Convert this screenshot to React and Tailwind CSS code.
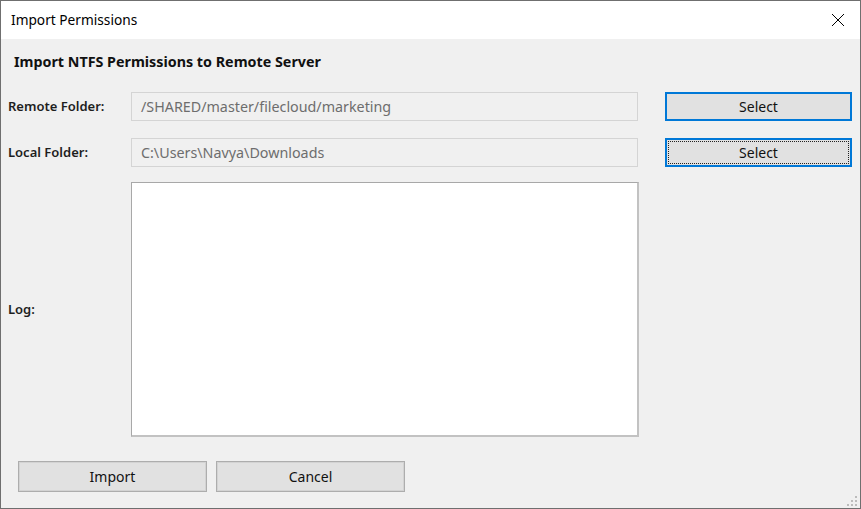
import React from 'react';

const FONT = { fontFamily: '"Noto Sans", "Open Sans", sans-serif' };

const Field = ({ label, value, focused }) => (
  <div className="flex items-center">
    <div className="w-[123px] text-[13px] font-semibold text-[#1e1e1e]">{label}</div>
    <div className="w-[507px] h-[29px] border border-[#d4d4d4] bg-[#f0f0f0] flex items-center px-[9px] text-[14.3px] text-[#6d6d6d]">
      {value}
    </div>
    <button
      type="button"
      className={`ml-[27px] w-[187px] h-[29px] border-2 border-[#0078d7] bg-[#e1e1e1] text-[14px] text-[#111] flex items-center justify-center ${focused ? 'outline-dotted outline-1 outline-[#222] outline-offset-[-4px]' : ''}`}
    >
      Select
    </button>
  </div>
);

export default function App() {
  return (
    <div className="w-[861px] h-[509px] border border-[#6f6f6f] bg-[#f0f0f0] flex flex-col overflow-hidden" style={FONT}>
      {/* title bar */}
      <div className="h-[38px] bg-white flex items-center justify-between pl-[10px] pr-[15px] shrink-0">
        <span className="text-[13.7px] text-[#000]">Import Permissions</span>
        <svg width="14" height="14" viewBox="0 0 14 14">
          <path d="M1 1L13 13M13 1L1 13" stroke="#000" strokeWidth="1" />
        </svg>
      </div>

      {/* body */}
      <div className="relative flex-1 flex flex-col pl-[7px]">
        <h1 className="mt-[14px] ml-[6px] text-[14.3px] font-bold text-[#111] leading-[18px]">
          Import NTFS Permissions to Remote Server
        </h1>

        <div className="mt-[21px]">
          <Field label="Remote Folder:" value="/SHARED/master/filecloud/marketing" />
        </div>
        <div className="mt-[17px]">
          <Field label="Local Folder:" value="C:\Users\Navya\Downloads" focused />
        </div>

        <div className="mt-[15px] flex items-center">
          <div className="w-[123px] text-[13px] font-semibold text-[#1e1e1e]">Log:</div>
          <div className="w-[508px] h-[255px] bg-white border border-[#a8a8a8] border-r-2 border-b-2 border-r-[#c2c2c2] border-b-[#c2c2c2]" />
        </div>

        <div className="mt-[24px] ml-[10px] flex gap-[9px]">
          <button type="button" className="w-[189px] h-[31px] border border-[#adadad] shadow-[inset_0_0_0_1px_#d3d3d3] bg-[#e1e1e1] text-[14px] text-[#111]">
            Import
          </button>
          <button type="button" className="w-[189px] h-[31px] border border-[#adadad] shadow-[inset_0_0_0_1px_#d3d3d3] bg-[#e1e1e1] text-[14px] text-[#111]">
            Cancel
          </button>
        </div>

        {/* resize grip */}
        <svg className="absolute right-[3px] bottom-[2px]" width="10" height="10" viewBox="0 0 10 10">
          <rect x="8" y="0" width="2" height="2" fill="#bcbcbc" />
          <rect x="4" y="4" width="2" height="2" fill="#bcbcbc" />
          <rect x="8" y="4" width="2" height="2" fill="#bcbcbc" />
          <rect x="0" y="8" width="2" height="2" fill="#bcbcbc" />
          <rect x="4" y="8" width="2" height="2" fill="#bcbcbc" />
          <rect x="8" y="8" width="2" height="2" fill="#bcbcbc" />
        </svg>
      </div>
    </div>
  );
}
